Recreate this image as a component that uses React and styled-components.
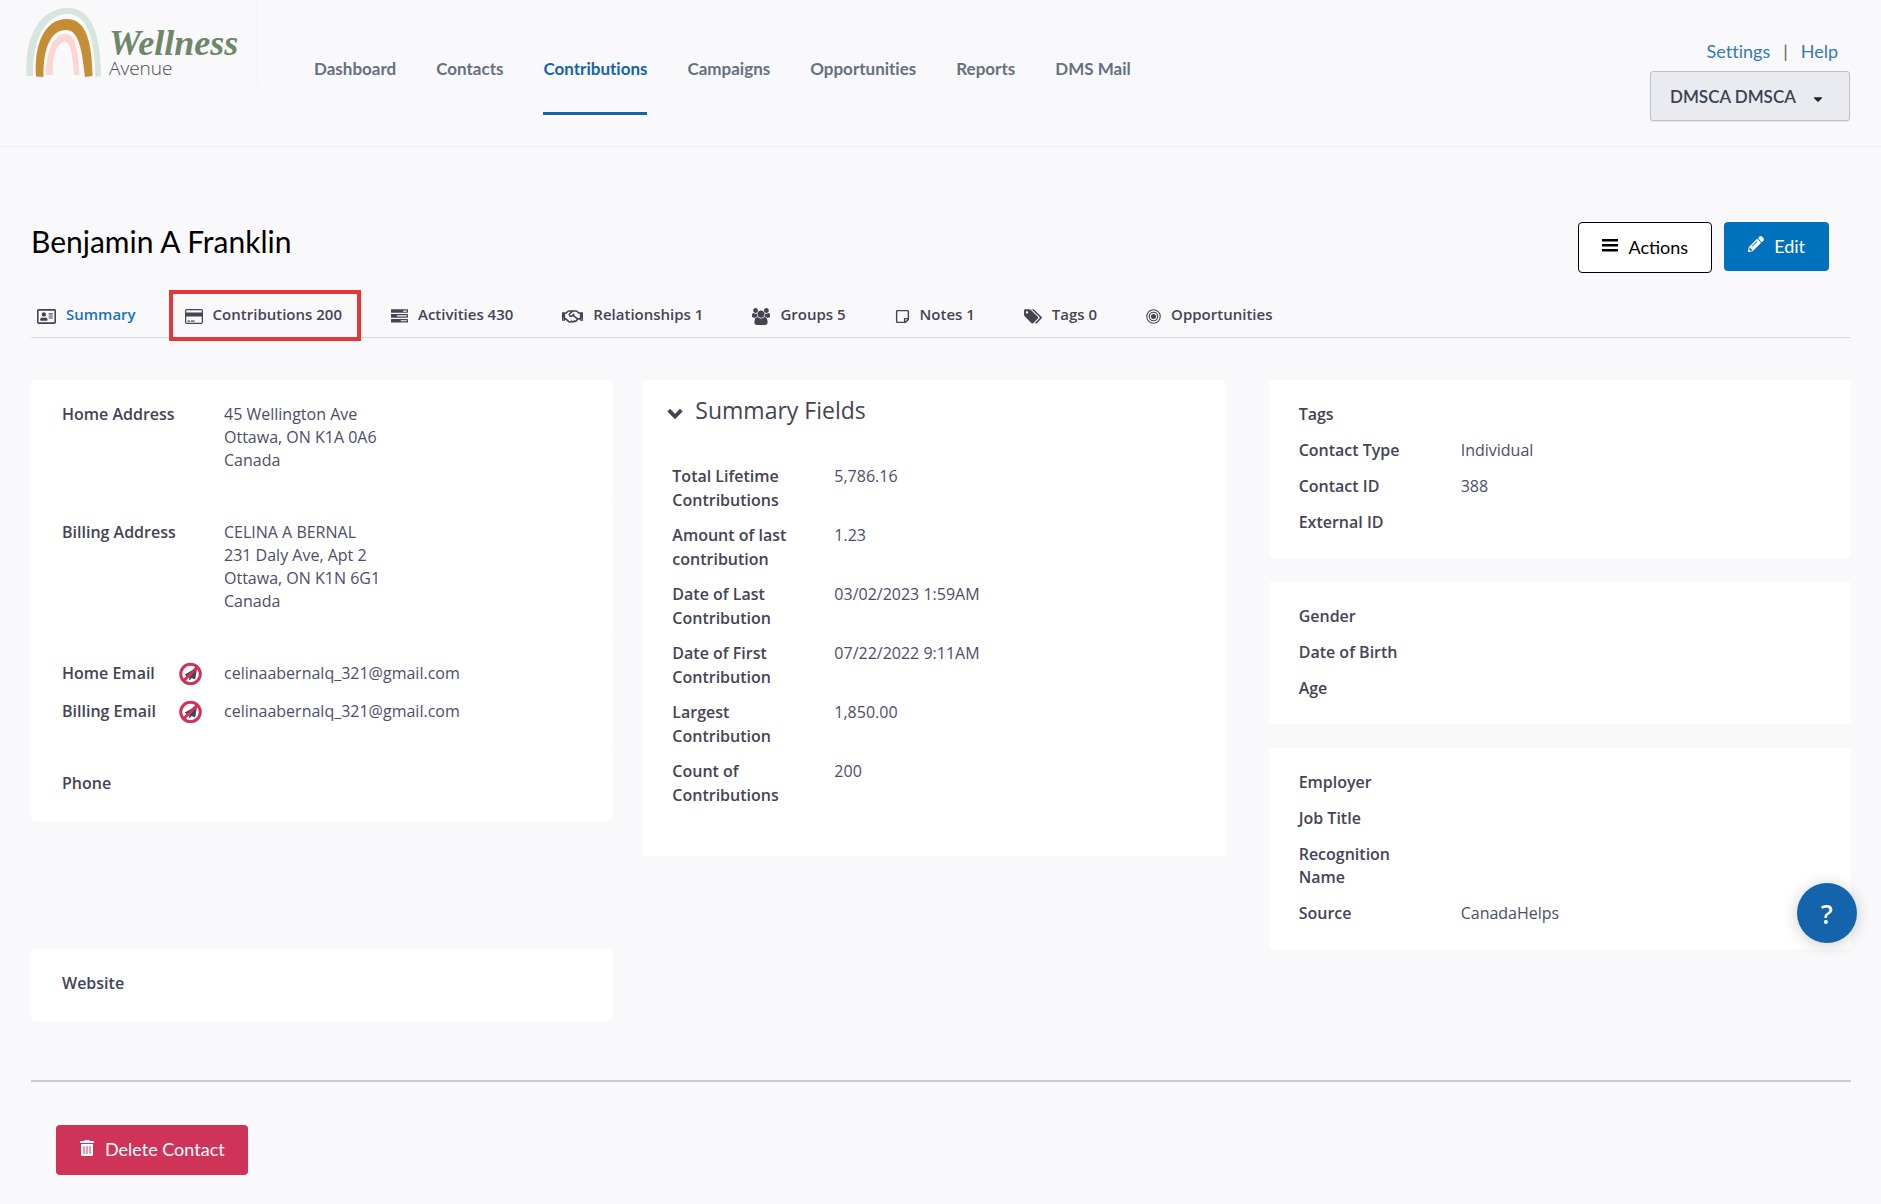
import React from "react";
import styled, { createGlobalStyle, css } from "styled-components";
import {
  FaRegAddressCard,
  FaRegHandshake,
  FaRegStickyNote,
  FaPencilAlt,
  FaTrashAlt,
  FaCaretDown,
  FaPaperPlane,
} from "react-icons/fa";

const color = {
  page: "#f9f9fc",
  ink: "#464354",
  value: "#4d4d69",
  nav: "#65717d",
  blue: "#1464ab",
  link: "#337ab7",
  primary: "#0071bd",
  danger: "#cf3357",
};

const heading = `Lato, "Liberation Sans", sans-serif`;
const body = `"Open Sans", "Noto Sans", sans-serif`;

const GlobalStyle = createGlobalStyle`
  *, *::before, *::after { box-sizing: border-box; }
  body {
    margin: 0;
    background: ${color.page};
    color: ${color.ink};
    font-family: ${body};
    font-size: 16px;
    line-height: 23px;
    font-variant-ligatures: none;
  }
  a { text-decoration: none; }
  svg { display: block; flex: none; }
`;

/* ---------- header ---------- */

const Header = styled.header`
  display: flex;
  align-items: flex-start;
  min-height: 147px;
  border-bottom: 1px solid #eeeff2;
`;

const Brand = styled.a`
  display: flex;
  gap: 7px;
  width: 258px;
  height: 86px;
  padding: 8px 0 0 26px;
  border-right: 1px solid #f0f1f4;
`;

const BrandText = styled.span`
  display: flex;
  flex-direction: column;
  padding-top: 18px;
`;

const BrandName = styled.span`
  color: #6f8769;
  font-family: "Brush Script MT", "Liberation Serif", cursive;
  font-size: 36px;
  font-style: italic;
  font-weight: 700;
  line-height: 34px;
`;

const BrandSub = styled.span`
  color: #4c4c4c;
  font-size: 19px;
  font-weight: 300;
  line-height: 16px;
`;

const MainNav = styled.nav`
  display: flex;
  flex: 1;
  gap: 40px;
  padding: 57px 0 0 56px;
`;

const NavLink = styled.a`
  padding-bottom: 31px;
  border-bottom: 3px solid ${(p) => (p.$active ? color.blue : "transparent")};
  color: ${(p) => (p.$active ? color.blue : color.nav)};
  font-family: ${heading};
  font-size: 17px;
  font-weight: 700;
  line-height: 24px;
  white-space: nowrap;
`;

const Account = styled.div`
  display: flex;
  flex-direction: column;
  align-items: flex-end;
  gap: 8px;
  padding: 39px 31px 0 0;
`;

const AccountLinks = styled.div`
  display: flex;
  gap: 13px;
  padding-right: 12px;
  color: #66604e;
  font-family: ${heading};
  font-size: 18px;
  line-height: 24px;

  a { color: ${color.link}; }
`;

const AccountButton = styled.button`
  display: flex;
  align-items: center;
  justify-content: space-between;
  width: 200px;
  height: 50px;
  padding: 0 24px 0 19px;
  border: 1px solid #bcc1cd;
  border-radius: 3px;
  background: #eaebf0;
  box-shadow: 0 1px 1px rgba(0, 0, 0, 0.08);
  color: #3b4252;
  font-family: ${heading};
  font-size: 17px;
  font-weight: 600;

  svg { margin-top: 6px; color: #222; }
`;

/* ---------- page ---------- */

const Main = styled.main`
  padding: 75px 30px 28px 31px;
`;

const TitleRow = styled.div`
  display: flex;
  align-items: flex-start;
  justify-content: space-between;
  padding-right: 22px;
`;

const Title = styled.h1`
  margin: 0;
  color: #000;
  font-family: ${heading};
  font-size: 30px;
  font-weight: 400;
  line-height: 38px;
`;

const Buttons = styled.div`
  display: flex;
  align-items: flex-start;
  gap: 12px;
`;

const tones = {
  plain: css`
    height: 51px;
    border: 1px solid #000;
    background: #fff;
    color: #000;
  `,
  primary: css`
    height: 49px;
    padding: 0 24px 2px;
    background: ${color.primary};
    color: #fff;
  `,
  danger: css`
    height: 50px;
    background: ${color.danger};
    color: #fff;
  `,
};

const Button = styled.button`
  display: inline-flex;
  align-items: center;
  gap: 10px;
  padding: 0 23px 2px;
  border: 0;
  border-radius: 4px;
  font-family: ${heading};
  font-size: 18px;
  font-weight: 400;
  line-height: 22px;
  white-space: nowrap;
  ${(p) => tones[p.$tone]}

  svg { margin-bottom: 3px; }
`;

const Tabs = styled.nav`
  display: flex;
  gap: 49px;
  margin-top: 31px;
  padding: 0 6px 13px;
  border-bottom: 1px solid #d3dfdf;
`;

const Tab = styled.a`
  position: relative;
  display: flex;
  align-items: center;
  gap: 10px;
  height: 20px;
  color: ${(p) => (p.$active ? "#1572bd" : color.ink)};
  font-size: 15px;
  font-weight: 600;
  line-height: 20px;
  white-space: nowrap;

  svg { margin-top: 4px; color: ${color.ink}; }

  ${(p) =>
    p.$marked &&
    css`
      &::after {
        content: "";
        position: absolute;
        inset: -14px -19px -17px -16px;
        border: 4px solid #e53638;
      }
    `}
`;

const Board = styled.div`
  display: grid;
  grid-template-columns: minmax(0, 1fr) 29px minmax(0, 1fr) 44px minmax(0, 1fr);
  grid-template-areas:
    "contact . summary . profile"
    "website . . . .";
  align-items: start;
  margin-top: 42px;
`;

const Column = styled.div`
  grid-area: ${(p) => p.$area};
  display: flex;
  flex-direction: column;
  gap: ${(p) => p.$gap || 0}px;
`;

const Card = styled.section`
  padding: 23px 30px 24px;
  border-radius: 3px;
  background: #fff;
`;

const ContactCard = styled(Card)`
  padding: 23px 31px 26px;
`;

const SummaryCard = styled(Card)`
  padding: 14px 30px 49px;
  line-height: 24px;
`;

const Fields = styled.dl`
  display: flex;
  flex-direction: column;
  gap: ${(p) => p.$gap || 13}px;
  margin: 0;
`;

const Field = styled.div`
  display: grid;
  grid-template-columns: 162px minmax(0, 1fr);
`;

const Label = styled.dt`
  display: flex;
  align-items: flex-start;
  justify-content: space-between;
  padding-right: ${(p) => (p.$icon ? 22 : 38)}px;
  color: ${color.ink};
  font-weight: 600;
`;

const Value = styled.dd`
  margin: 0;
  color: ${color.value};
  white-space: pre-line;
`;

const SummaryHead = styled.h2`
  margin: 0 0 38px;
  font-size: 23px;
  font-weight: 500;
  line-height: 32px;
`;

const Collapse = styled.button`
  display: flex;
  align-items: center;
  gap: 12px;
  margin-left: -5px;
  padding: 0;
  border: 0;
  background: none;
  color: inherit;
  font: inherit;

  svg { margin-top: 8px; }
`;

const Divider = styled.hr`
  height: 2px;
  margin: 59px 0 43px;
  border: 0;
  background: #ccc;
`;

const Footer = styled.footer`
  padding-left: 25px;
`;

const HelpButton = styled.button`
  position: fixed;
  right: 24px;
  bottom: 261px;
  width: 60px;
  height: 60px;
  border: 0;
  border-radius: 50%;
  background: ${color.blue};
  box-shadow: 0 2px 16px rgba(0, 0, 0, 0.2);
  color: #fff;
  font-family: ${body};
  font-size: 27px;
  font-weight: 600;
`;

/* ---------- drawings ---------- */

const Rainbow = () => (
  <svg width="76" height="70" viewBox="26 8 76 70" aria-hidden="true">
    <path fill="#d6e6de" d="M26.500 76C24 40 38 8 68 8C92 8 101 35 101 76L95.500 77C95 42 88 14 68 14C45 14 32 40 33 76Z" />
    <path fill="#c68d37" d="M36 76.500C34 45 44 19 67 19C86 19 92 42 92.500 76L85 77C82 50 79 30 66 30C51 30 43 48 43.500 77Z" />
    <path fill="#fad7d1" d="M46 75C46 52 53 34 66 34C75 34 78 48 79.500 75L74 75C72.500 56 71 42 65 42C57 42 52 56 53 75Z" />
  </svg>
);

const CardIcon = () => (
  <svg width="18" height="15" viewBox="0 0 18 15" aria-hidden="true">
    <rect x="0.600" y="0.600" width="16.800" height="13.800" rx="1.300" fill="none" stroke="currentColor" strokeWidth="1.200" />
    <path fill="currentColor" d="M0.500 3.500h17v4h-17zM2.500 11.500h2.500v1.200h-2.500zM6 11.500h3.500v1.200h-3.500z" />
  </svg>
);

const TasksIcon = () => (
  <svg width="17" height="17" viewBox="0 0 1792 1792" fill="currentColor" aria-hidden="true">
    <path fillRule="evenodd" d="M64 128h1664q64 0 64 64v256q0 64-64 64H64q-64 0-64-64V192q0-64 64-64zM1280 384h384V256h-384zM64 640h1664q64 0 64 64v256q0 64-64 64H64q-64 0-64-64V704q0-64 64-64zM640 896h1024V768H640zM64 1152h1664q64 0 64 64v256q0 64-64 64H64q-64 0-64-64v-256q0-64 64-64zM1024 1408h640v-128h-640z" />
  </svg>
);

const GroupIcon = () => (
  <svg width="18" height="17" viewBox="0 0 1920 1792" fill="currentColor" aria-hidden="true">
    <path d="M593 896q-162 5-265 128h-134q-82 0-138-40.500t-56-118.500q0-353 124-353 6 0 43.500 21t97.500 42.500 119 21.500q67 0 133-23-5 37-5 66 0 139 81 256zm1071 637q0 120-73 189.500t-194 69.500h-874q-121 0-194-69.500t-73-189.500q0-53 3.500-103.500t14-109 26.500-108.500 43-97.500 62-81 85.500-53.500 111.500-20q10 0 43 21.500t73 48 107 48 135 21.500 135-21.500 107-48 73-48 43-21.500q61 0 111.500 20t85.500 53.500 62 81 43 97.500 26.500 108.500 14 109 3.500 103.500zm-1024-1277q0 106-75 181t-181 75-181-75-75-181 75-181 181-75 181 75 75 181zm704 384q0 159-112.500 271.500t-271.500 112.500-271.500-112.500-112.500-271.500 112.500-271.500 271.500-112.500 271.500 112.500 112.500 271.500zm576 225q0 78-56 118.500t-138 40.500h-134q-103-123-265-128 81-117 81-256 0-29-5-66 66 23 133 23 59 0 119-21.500t97.500-42.500 43.500-21q124 0 124 353zm-128-609q0 106-75 181t-181 75-181-75-75-181 75-181 181-75 181 75 75 181z" />
  </svg>
);

const TagsIcon = () => (
  <svg width="18" height="17" viewBox="0 0 1920 1792" fill="currentColor" aria-hidden="true">
    <path d="M448 448q0-53-37.500-90.500t-90.500-37.500-90.500 37.500-37.500 90.500 37.500 90.500 90.500 37.500 90.500-37.500 37.500-90.500zm1067 576q0 53-37 90l-491 492q-39 37-91 37-53 0-90-37l-715-716q-38-37-64.500-101t-26.500-117v-416q0-52 38-90t90-38h416q53 0 117 26.500t102 64.500l715 714q37 39 37 91zm384 0q0 53-37 90l-491 492q-39 37-91 37-36 0-59-14t-53-45l470-470q37-37 37-90 0-52-37-91l-715-714q-38-38-102-64.500t-117-26.500h224q53 0 117 26.500t102 64.500l715 714q37 39 37 91z" />
  </svg>
);

const TargetIcon = () => (
  <svg width="15" height="15" viewBox="0 0 30 30" fill="none" stroke="currentColor" strokeWidth="2.200" aria-hidden="true">
    <circle cx="15" cy="15" r="13.500" />
    <circle cx="15" cy="15" r="8.500" />
    <circle cx="15" cy="15" r="5" fill="currentColor" stroke="none" />
  </svg>
);

const MenuIcon = () => (
  <svg width="16" height="15" viewBox="0 0 16 15" fill="currentColor" aria-hidden="true">
    <path d="M0 1h16v2.600H0zM0 6h16v2.600H0zM0 11h16v2.600H0z" />
  </svg>
);

const ChevronIcon = () => (
  <svg width="16" height="12" viewBox="0 0 16 12" fill="none" stroke="currentColor" strokeWidth="3.800" aria-hidden="true">
    <path d="M1.700 2.200L8 8.500L14.300 2.200" />
  </svg>
);

const StackBox = styled.span`
  display: grid;
  place-items: center;
  width: 23px;
  height: 23px;

  > * { grid-area: 1 / 1; }
`;

const NoMail = () => (
  <StackBox role="img" aria-label="Do not email">
    <FaPaperPlane size={12} color={color.ink} />
    <svg width="23" height="23" viewBox="0 0 23 23" fill="none" stroke={color.danger} strokeWidth="3" aria-hidden="true">
      <circle cx="11.500" cy="12" r="9.800" />
      <path d="M5 18.500L18 5.500" />
    </svg>
  </StackBox>
);

/* ---------- data ---------- */

const navItems = ["Dashboard", "Contacts", "Contributions", "Campaigns", "Opportunities", "Reports", "DMS Mail"];

const tabs = [
  { label: "Summary", icon: <FaRegAddressCard size={19} />, active: true },
  { label: "Contributions 200", icon: <CardIcon />, marked: true },
  { label: "Activities 430", icon: <TasksIcon /> },
  { label: "Relationships 1", icon: <FaRegHandshake size={21} /> },
  { label: "Groups 5", icon: <GroupIcon /> },
  { label: "Notes 1", icon: <FaRegStickyNote size={15} /> },
  { label: "Tags 0", icon: <TagsIcon /> },
  { label: "Opportunities", icon: <TargetIcon /> },
];

const contactCards = [
  [["Home Address", "45 Wellington Ave\nOttawa, ON K1A 0A6\nCanada"]],
  [["Billing Address", "CELINA A BERNAL\n231 Daly Ave, Apt 2\nOttawa, ON K1N 6G1\nCanada"]],
  [
    ["Home Email", "celinaabernalq_321@gmail.com", <NoMail key="h" />],
    ["Billing Email", "celinaabernalq_321@gmail.com", <NoMail key="b" />],
  ],
  [["Phone", ""]],
];

const summaryFields = [
  ["Total Lifetime Contributions", "5,786.16"],
  ["Amount of last contribution", "1.23"],
  ["Date of Last Contribution", "03/02/2023 1:59AM"],
  ["Date of First Contribution", "07/22/2022 9:11AM"],
  ["Largest Contribution", "1,850.00"],
  ["Count of Contributions", "200"],
];

const profileCards = [
  [["Tags", ""], ["Contact Type", "Individual"], ["Contact ID", "388"], ["External ID", ""]],
  [["Gender", ""], ["Date of Birth", ""], ["Age", ""]],
  [["Employer", ""], ["Job Title", ""], ["Recognition Name", ""], ["Source", "CanadaHelps"]],
];

const FieldList = ({ items, gap }) => (
  <Fields $gap={gap}>
    {items.map(([label, value, icon]) => (
      <Field key={label}>
        <Label $icon={!!icon}>
          {label}
          {icon}
        </Label>
        <Value>{value}</Value>
      </Field>
    ))}
  </Fields>
);

export default function App() {
  const [open, setOpen] = React.useState(true);

  return (
    <>
      <GlobalStyle />
      <Header>
        <Brand href="#home">
          <Rainbow />
          <BrandText>
            <BrandName>Wellness</BrandName>
            <BrandSub>Avenue</BrandSub>
          </BrandText>
        </Brand>
        <MainNav aria-label="Main">
          {navItems.map((item) => (
            <NavLink key={item} href="#nav" $active={item === "Contributions"}>
              {item}
            </NavLink>
          ))}
        </MainNav>
        <Account>
          <AccountLinks>
            <a href="#settings">Settings</a>
            <span>|</span>
            <a href="#help">Help</a>
          </AccountLinks>
          <AccountButton type="button">
            DMSCA DMSCA
            <FaCaretDown size={14} />
          </AccountButton>
        </Account>
      </Header>

      <Main>
        <TitleRow>
          <Title>Benjamin A Franklin</Title>
          <Buttons>
            <Button type="button" $tone="plain">
              <MenuIcon />
              Actions
            </Button>
            <Button type="button" $tone="primary">
              <FaPencilAlt size={16} />
              Edit
            </Button>
          </Buttons>
        </TitleRow>

        <Tabs aria-label="Contact record">
          {tabs.map((t) => (
            <Tab key={t.label} href="#tab" $active={t.active} $marked={t.marked}>
              {t.icon}
              {t.label}
            </Tab>
          ))}
        </Tabs>

        <Board>
          <Column $area="contact">
            {contactCards.map((items) => (
              <ContactCard key={items[0][0]}>
                <FieldList items={items} gap={15} />
              </ContactCard>
            ))}
          </Column>
          <Column $area="summary">
            <SummaryCard>
              <SummaryHead>
                <Collapse type="button" aria-expanded={open} onClick={() => setOpen(!open)}>
                  <ChevronIcon />
                  Summary Fields
                </Collapse>
              </SummaryHead>
              {open && <FieldList items={summaryFields} gap={11} />}
            </SummaryCard>
          </Column>
          <Column $area="profile" $gap={24}>
            {profileCards.map((items) => (
              <Card key={items[0][0]}>
                <FieldList items={items} />
              </Card>
            ))}
          </Column>
          <Column $area="website">
            <ContactCard>
              <FieldList items={[["Website", ""]]} />
            </ContactCard>
          </Column>
        </Board>

        <Divider />

        <Footer>
          <Button type="button" $tone="danger">
            <FaTrashAlt size={16} />
            Delete Contact
          </Button>
        </Footer>
      </Main>

      <HelpButton type="button" aria-label="Help">?</HelpButton>
    </>
  );
}
